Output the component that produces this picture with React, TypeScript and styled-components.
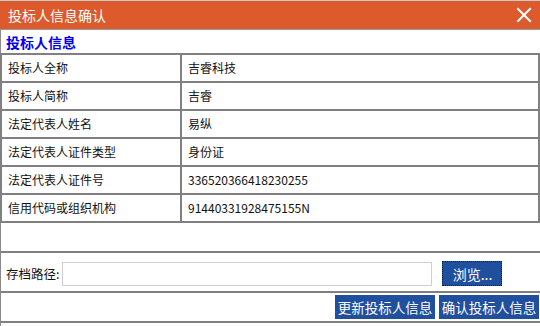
import React from "react";
import styled, { createGlobalStyle } from "styled-components";

const Global = createGlobalStyle`
  html, body { margin: 0; padding: 0; background: #fff; }
  body { font-family: "Noto Sans CJK SC", "Noto Sans", sans-serif; }
  * { box-sizing: border-box; }
`;

const Dialog = styled.div`
  width: 540px;
  height: 326px;
  display: flex;
  flex-direction: column;
  background: #fff;
  border-top: 1px solid #c8c8c8;
`;

const TitleBar = styled.div`
  height: 29px;
  background: #dc5a2b;
  border-bottom: 1px solid #9a9a9a;
  display: flex;
  align-items: center;
  justify-content: space-between;
  padding: 0 8px 0 8px;
  color: #fff;
  font-size: 14px;
  line-height: 1;
`;

const CloseIcon = () => (
  <svg width="16" height="16" viewBox="0 0 16 16">
    <path d="M2 2 L14 14 M14 2 L2 14" stroke="#fff" strokeWidth="2" strokeLinecap="square" />
  </svg>
);

const Body = styled.div`
  flex: 1;
  display: flex;
  flex-direction: column;
  border-left: 1px solid #8a8a8a;
`;

const SectionTitle = styled.div`
  height: 23px;
  display: flex;
  align-items: center;
  padding-left: 5px;
  color: #0000ee;
  font-weight: bold;
  font-size: 14px;
`;

const Table = styled.table`
  width: 540px;
  margin-left: -1px;
  border-collapse: collapse;
  border-top: 2px solid #808080;
  font-size: 12px;
  color: #111;
`;

const Row = styled.tr`
  height: 28px;
  border-bottom: 2px solid #808080;
`;

const Cell = styled.td<{ $label?: boolean }>`
  padding: 0 0 0 6px;
  width: ${(p) => (p.$label ? "180px" : "auto")};
  border-left: 2px solid #808080;
  border-right: 2px solid #808080;
  vertical-align: middle;
  line-height: 26px;
`;

const Spacer = styled.div`
  height: 30px;
  border-bottom: 2px solid #808080;
`;

const PathRow = styled.div`
  height: 40px;
  display: flex;
  align-items: center;
  padding: 3px 0 0 5px;
  border-bottom: 2px solid #808080;
  font-size: 12.5px;
  color: #111;
`;

const PathInput = styled.input`
  margin-left: 3px;
  width: 370px;
  height: 24px;
  border: 1px solid #cfcfcf;
  outline: none;
  padding: 0 4px;
`;

const BlueButton = styled.button<{ $focused?: boolean }>`
  background: #1f4f9d;
  color: #fff;
  font-family: "Noto Sans CJK SC", sans-serif;
  font-size: 13px;
  border: ${(p) => (p.$focused ? "1px dotted #0a1f44" : "none")};
  padding: 0;
  height: 24px;
  display: flex;
  align-items: center;
  justify-content: center;
  cursor: pointer;
`;

const BrowseButton = styled(BlueButton)`
  width: 60px;
  height: 25px;
  margin-left: 10px;
  font-size: 14px;
`;

const ActionRow = styled.div`
  height: 30px;
  display: flex;
  align-items: center;
  justify-content: flex-end;
  gap: 4px;
  padding-right: 1px;
  border-bottom: 2px solid #808080;
`;

const ActionButton = styled(BlueButton)`
  width: 100px;
  font-size: 13.5px;
`;

const rows: [string, string][] = [
  ["投标人全称", "吉睿科技"],
  ["投标人简称", "吉睿"],
  ["法定代表人姓名", "易纵"],
  ["法定代表人证件类型", "身份证"],
  ["法定代表人证件号", "336520366418230255"],
  ["信用代码或组织机构", "91440331928475155N"],
];

export default function App() {
  return (
    <>
      <Global />
      <Dialog>
        <TitleBar>
          <span>投标人信息确认</span>
          <CloseIcon />
        </TitleBar>
        <Body>
          <SectionTitle>投标人信息</SectionTitle>
          <Table>
            <tbody>
              {rows.map(([k, v]) => (
                <Row key={k}>
                  <Cell $label>{k}</Cell>
                  <Cell>{v}</Cell>
                </Row>
              ))}
            </tbody>
          </Table>
          <Spacer />
          <PathRow>
            <span>存档路径:</span>
            <PathInput />
            <BrowseButton $focused>浏览...</BrowseButton>
          </PathRow>
          <ActionRow>
            <ActionButton>更新投标人信息</ActionButton>
            <ActionButton>确认投标人信息</ActionButton>
          </ActionRow>
        </Body>
      </Dialog>
    </>
  );
}
